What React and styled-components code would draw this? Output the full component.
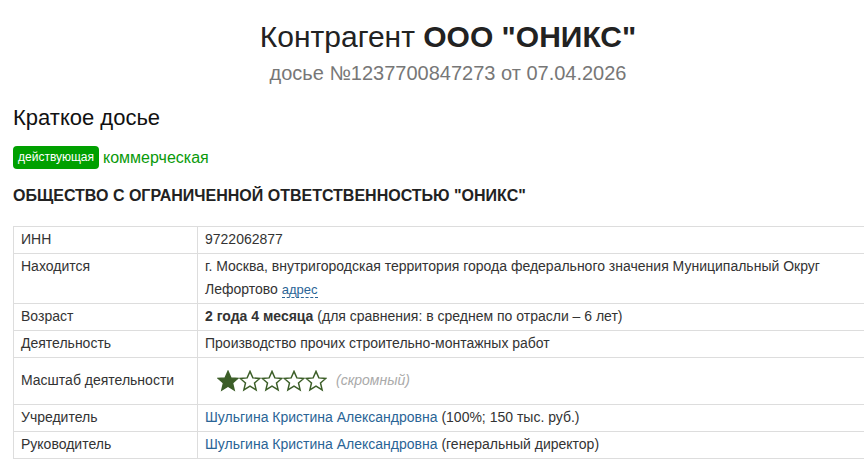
import React from "react";
import styled, { createGlobalStyle } from "styled-components";

const GlobalStyle = createGlobalStyle`
  html, body {
    margin: 0;
    padding: 0;
    background: #fff;
    overflow: hidden;
  }
  body {
    font-family: "Liberation Sans", Arial, sans-serif;
    color: #333;
    font-size: 14px;
  }
`;

const Page = styled.div`
  width: 870px;
  padding: 0 0 0 13px;
`;

const Header = styled.header`
  text-align: center;
  padding-top: 18px;
`;

const Title = styled.h1`
  margin: 0;
  font-size: 30px;
  font-weight: normal;
  line-height: 38px;
  color: #222;
  b {
    font-weight: bold;
  }
`;

const Subtitle = styled.div`
  font-size: 20px;
  line-height: 25px;
  color: #777;
  margin-top: 5px;
`;

const SectionTitle = styled.h2`
  margin: 18px 0 0;
  font-size: 22px;
  font-weight: normal;
  line-height: 28px;
  color: #111;
`;

const Tags = styled.div`
  display: flex;
  align-items: center;
  gap: 4px;
  margin-top: 14px;
`;

const Badge = styled.span`
  display: inline-block;
  background: #00a000;
  color: #fff;
  font-size: 12px;
  line-height: 23px;
  padding: 0 5px;
  border-radius: 4px;
`;

const Kind = styled.span`
  color: #0a9a0a;
  font-size: 16px;
`;

const FullName = styled.h3`
  margin: 17px 0 0;
  font-size: 16px;
  font-weight: bold;
  line-height: 20px;
  color: #222;
`;

const Table = styled.table`
  margin-top: 20px;
  width: 870px;
  border-collapse: collapse;
  td {
    border: 1px solid #ddd;
    padding: 1px 7px 2px;
    line-height: 23px;
    vertical-align: top;
    color: #333;
  }
  td:first-child {
    width: 169px;
  }
`;

const MiddleCell = styled.td`
  && {
    vertical-align: middle;
    height: 43px;
  }
`;

const Link = styled.a`
  color: #2a6496;
  text-decoration: none;
`;

const DashedLink = styled(Link)`
  border-bottom: 1px dashed #2a6496;
  font-size: 13px;
  line-height: 16px;
`;

const Rating = styled.div`
  display: flex;
  align-items: center;
  padding-left: 12px;
`;

const Stars = styled.span`
  display: inline-flex;
`;

const Note = styled.span`
  color: #aaa;
  font-style: italic;
  margin-left: 9px;
`;

const Star = ({ filled }) => (
  <svg width="22" height="22" viewBox="0 0 24 24">
    <path
      d="M12 1.5l3.1 7.1 7.6.6-5.8 5 1.8 7.5L12 17.7l-6.7 4 1.8-7.5-5.8-5 7.6-.6z"
      fill={filled ? "#3c5e28" : "#fff"}
      stroke="#3c5e28"
      strokeWidth="1.6"
      strokeLinejoin="miter"
    />
  </svg>
);

export default function App() {
  return (
    <Page>
      <GlobalStyle />
      <Header>
        <Title>
          Контрагент <b>ООО "ОНИКС"</b>
        </Title>
        <Subtitle>досье №1237700847273 от 07.04.2026</Subtitle>
      </Header>
      <SectionTitle>Краткое досье</SectionTitle>
      <Tags>
        <Badge>действующая</Badge>
        <Kind>коммерческая</Kind>
      </Tags>
      <FullName>ОБЩЕСТВО С ОГРАНИЧЕННОЙ ОТВЕТСТВЕННОСТЬЮ "ОНИКС"</FullName>
      <Table>
        <tbody>
          <tr>
            <td>ИНН</td>
            <td>9722062877</td>
          </tr>
          <tr>
            <td>Находится</td>
            <td>
              г. Москва, внутригородская территория города федерального значения Муниципальный Округ
              <br />
              Лефортово <DashedLink href="#">адрес</DashedLink>
            </td>
          </tr>
          <tr>
            <td>Возраст</td>
            <td>
              <b>2 года 4 месяца</b> (для сравнения: в среднем по отрасли – 6 лет)
            </td>
          </tr>
          <tr>
            <td>Деятельность</td>
            <td>Производство прочих строительно-монтажных работ</td>
          </tr>
          <tr>
            <MiddleCell>Масштаб деятельности</MiddleCell>
            <MiddleCell>
              <Rating>
                <Stars>
                  {[0, 1, 2, 3, 4].map((i) => (
                    <Star key={i} filled={i === 0} />
                  ))}
                </Stars>
                <Note>(скромный)</Note>
              </Rating>
            </MiddleCell>
          </tr>
          <tr>
            <td>Учредитель</td>
            <td>
              <Link href="#">Шульгина Кристина Александровна</Link> (100%; 150 тыс. руб.)
            </td>
          </tr>
          <tr>
            <td>Руководитель</td>
            <td>
              <Link href="#">Шульгина Кристина Александровна</Link> (генеральный директор)
            </td>
          </tr>
        </tbody>
      </Table>
    </Page>
  );
}
